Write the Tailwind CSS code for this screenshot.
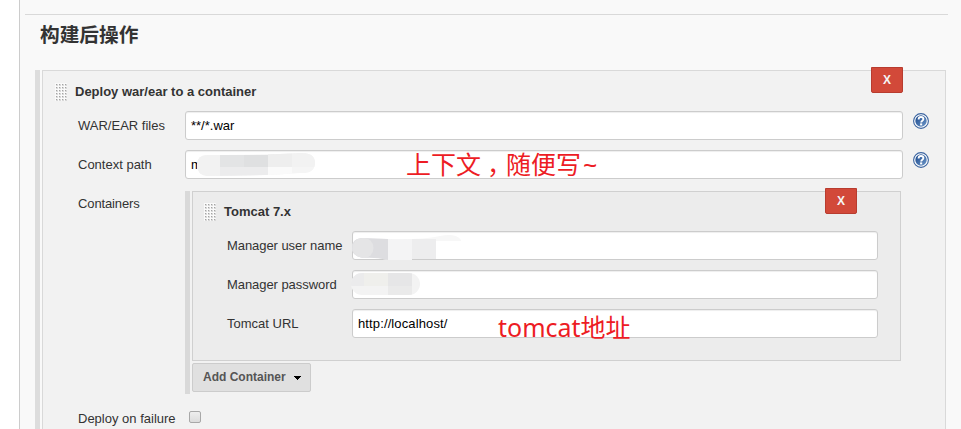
<!DOCTYPE html>
<html lang="zh-CN">
<head>
<meta charset="utf-8">
<title>构建后操作</title>
<script src="https://cdn.jsdelivr.net/npm/@tailwindcss/browser@4"></script>
</head>
<body class="bg-white">
<svg width="0" height="0" class="absolute">
  <defs>
    <pattern id="dots" width="3" height="3" patternUnits="userSpaceOnUse">
      <rect width="3" height="3" fill="#fafafa"/><rect x="1" y="1" width="2" height="2" fill="#d8d8d8"/><rect x="1" y="1" width="1" height="1" fill="#a4a4a4"/>
    </pattern>
    <linearGradient id="blue" x1="0" y1="0" x2="1" y2="1"><stop offset="0" stop-color="#17458a"/><stop offset="1" stop-color="#6f98c9"/></linearGradient>
    <symbol id="help" viewBox="0 0 16 16">
      <circle cx="8" cy="8" r="7.4" fill="#fff" stroke="#3a639f" stroke-width="1.1"/>
      <circle cx="8" cy="8" r="5.7" fill="url(#blue)"/>
      <path d="M5.6 6.4C5.6 4.7 6.6 4 8 4s2.4.8 2.4 2.1c0 1.7-2.2 1.6-2.2 3.3" fill="none" stroke="#fff" stroke-width="1.9"/>
      <rect x="7.1" y="10.4" width="2.1" height="2" fill="#fff"/>
    </symbol>
  </defs>
</svg>
<div class="relative h-[429px] w-[961px] overflow-hidden pl-[19px] font-['Liberation_Sans','Noto_Sans_CJK_SC',sans-serif] text-[13px] leading-[15px] text-[#333]">
  <main class="h-full border-l border-[#ccc] bg-[#f9f9f9] pt-[14px] pl-[5px]">
    <div class="h-px w-[923px] bg-[#d9d9d9]"></div>
    <h1 class="h-[55px] pt-[5px] pl-[15px] text-[19.7px] leading-[30px] font-bold">构建后操作</h1>
    <section class="ml-[10px] flex h-[400px] w-[911px] border-l-5 border-[#ddd] pl-[2px]">
      <div class="w-[904px] border border-[#d9d9d9] bg-[#f2f2f2]">
        <div class="relative flex h-[40px] items-start pt-[12px] pl-[12px]">
          <svg width="12" height="18"><rect width="12" height="18" fill="url(#dots)"/></svg>
          <b class="ml-[8px] pt-px">Deploy war/ear to a container</b>
          <button class="absolute top-[-4px] left-[828px] h-[26px] w-[32px] rounded-b-[2px] border border-[#b83c2f] bg-[#d24939] text-[12px] leading-[24px] font-bold text-[#f5f5f5]">X</button>
        </div>
        <div class="flex h-[39px]">
          <label class="w-[142px] pt-[7px] pl-[35px]">WAR/EAR files</label>
          <div class="h-[29px] w-[718px] rounded-[3px] border border-[#ccc] bg-white pt-[7px] pl-[5px] leading-[14px] text-black shadow-[inset_0_1px_1px_rgba(0,0,0,0.07)]">**/*.war</div>
          <svg class="mt-[2px] ml-[10px]" width="16" height="16"><use href="#help"/></svg>
        </div>
        <div class="flex h-[41px]">
          <label class="w-[142px] pt-[7px] pl-[35px]">Context path</label>
          <div class="h-[29px] w-[718px] rounded-[3px] border border-[#ccc] bg-white pt-[6px] pl-[5px] text-black shadow-[inset_0_1px_1px_rgba(0,0,0,0.07)]">m</div>
          <svg class="mt-[2px] ml-[10px]" width="16" height="16"><use href="#help"/></svg>
        </div>
        <div class="flex h-[212px]">
          <label class="w-[142px] pt-[5px] pl-[35px] tracking-[-0.12px]">Containers</label>
          <div class="h-[203px] border-l-5 border-[#d9d9d9] pl-[2px]">
            <div class="h-[170px] w-[709px] border border-[#d0d0d0] bg-[#ececec]">
              <div class="relative flex h-[39px] items-start pt-[11px] pl-[11px]">
                <svg width="12" height="18"><rect width="12" height="18" fill="url(#dots)"/></svg>
                <b class="ml-[8px] pt-px">Tomcat 7.x</b>
                <button class="absolute top-[-4px] left-[632px] h-[26px] w-[32px] rounded-b-[2px] border border-[#b83c2f] bg-[#d24939] text-[12px] leading-[24px] font-bold text-[#f5f5f5]">X</button>
              </div>
              <div class="flex h-[39px]">
                <label class="w-[159px] pt-[7px] pl-[34px] tracking-[-0.06px]">Manager user name</label>
                <div class="h-[29px] w-[526px] rounded-[3px] border border-[#ccc] bg-white shadow-[inset_0_1px_1px_rgba(0,0,0,0.07)]"></div>
              </div>
              <div class="flex h-[39px]">
                <label class="w-[159px] pt-[7px] pl-[34px] tracking-[-0.06px]">Manager password</label>
                <div class="h-[29px] w-[526px] rounded-[3px] border border-[#ccc] bg-white shadow-[inset_0_1px_1px_rgba(0,0,0,0.07)]"></div>
              </div>
              <div class="flex">
                <label class="w-[159px] pt-[7px] pl-[34px]">Tomcat URL</label>
                <div class="h-[29px] w-[526px] rounded-[3px] border border-[#ccc] bg-white pt-[6px] pl-[5px] tracking-[0.12px] text-black shadow-[inset_0_1px_1px_rgba(0,0,0,0.07)]">http://localhost/</div>
              </div>
            </div>
            <button class="mt-[2px] flex h-[29px] w-[119px] items-center rounded-[2px] border border-[#ccc] bg-[#e0e0e0] pb-px pl-[10px] text-[12px] font-bold text-[#555]">
              <span class="w-[91px] text-left">Add Container</span>
              <svg class="mt-[2px]" width="7" height="4" shape-rendering="crispEdges"><path d="M0 0h7v1H6v1H5v1H4v1H3V3H2V2H1V1H0z" fill="#000"/></svg>
            </button>
          </div>
        </div>
        <div class="flex pt-[8px]">
          <label class="w-[146px] pl-[35px]">Deploy on failure</label>
          <span class="h-[12px] w-[12px] rounded-[2px] border border-[#a8a8a8] bg-linear-to-b from-[#eee] to-[#dcdcdc]"></span>
        </div>
      </div>
    </section>
  </main>

  <!-- Redaction strokes laid over the field values -->
  <svg class="absolute top-0 left-0" width="961" height="429">
    <clipPath id="c1"><path d="M207 155Q265 155 300 153Q315 152 315 163Q315 174 300 173Q260 176 207 176Q197 175 197 165Q197 155 207 155z"/></clipPath>
    <g clip-path="url(#c1)">
      <rect x="190" y="150" width="130" height="28" fill="#f5f5f5"/><rect x="190" y="150" width="30" height="28" fill="#f2f2f2"/>
      <rect x="220" y="155" width="24" height="12" fill="#e3e4e5"/><rect x="244" y="155" width="24" height="12" fill="#dfe0e1"/><rect x="268" y="150" width="24" height="17" fill="#eee"/>
      <rect x="220" y="167" width="48" height="10" fill="#ececed"/><rect x="268" y="167" width="24" height="10" fill="#fafafa"/><rect x="292" y="150" width="25" height="17" fill="#f2f2f2"/>
    </g>
    <clipPath id="c2"><path d="M363 238L388 239Q420 240 440 236Q456 233 461 240L461 241L436 241L436 259L412 259L412 260L388 260Q375 257 363 258Q352 256 352 248Q352 238 363 238z"/></clipPath>
    <g clip-path="url(#c2)">
      <rect x="350" y="235" width="112" height="26" fill="#f7f7f7"/><rect x="350" y="235" width="38" height="26" fill="#dddde0"/><rect x="388" y="239" width="24" height="22" fill="#f4f4f5"/><rect x="412" y="239" width="24" height="22" fill="#ededee"/>
      <circle cx="363" cy="248" r="10.5" fill="#e5e5e6"/>
    </g>
    <clipPath id="c3"><rect x="351" y="273" width="69" height="22" rx="11"/></clipPath>
    <g clip-path="url(#c3)">
      <rect x="350" y="272" width="72" height="24" fill="#f3f3f3"/><rect x="350" y="272" width="14" height="14" fill="#ebebec"/><rect x="364" y="272" width="24" height="14" fill="#efefec"/><rect x="388" y="272" width="24" height="14" fill="#e6e6e7"/><rect x="388" y="286" width="24" height="10" fill="#eaeaea"/>
    </g>
  </svg>
  <div class="absolute top-[145px] left-[406px] font-['Noto_Sans_CJK_SC',sans-serif] text-[25px] leading-[36px] whitespace-nowrap text-[#ed1c24]">上下文<span class="mr-[6.5px] ml-[6px] [font-feature-settings:'halt']">，</span>随便写<span class="ml-[2px] font-['Noto_Sans']">~</span></div>
  <div class="absolute top-[309px] left-[498px] font-['Noto_Sans','Noto_Sans_CJK_SC',sans-serif] text-[25px] leading-[36px] whitespace-nowrap text-[#ed1c24]">tomcat地址</div>
</div>
</body>
</html>
